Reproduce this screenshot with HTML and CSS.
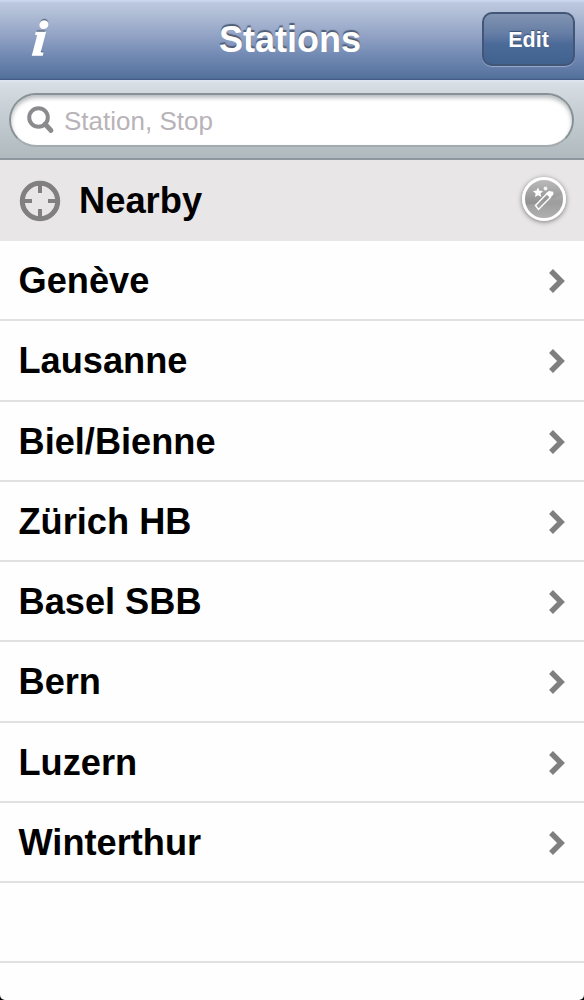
FILE: index.html
```html
<!DOCTYPE html>
<html lang="en">
<head>
    <meta charset="UTF-8">
    <meta name="viewport" content="width=device-width, initial-scale=1.0">
    <title>Stations</title>
    <link rel="stylesheet" href="styles.css">
</head>
<body>
    <div class="screen">
        <header class="navbar">
            <span class="info">i</span>
            <h1>Stations</h1>
            <button class="edit">Edit</button>
        </header>

        <div class="searchbar">
            <div class="search-field">
                <svg class="search-icon" width="28" height="28" viewBox="0 0 28 28">
                    <circle cx="11.500" cy="11.500" r="9.300" fill="none" stroke="#8b8b8e" stroke-width="4"/>
                    <path d="M18 18l6 6.5" stroke="#8b8b8e" stroke-width="4.800" stroke-linecap="round"/>
                </svg>
                <span class="placeholder">Station, Stop</span>
            </div>
        </div>

        <div class="nearby">
            <svg class="target" width="42" height="42" viewBox="0 0 42 42">
                <circle cx="21" cy="21" r="17.7" fill="none" stroke="#808080" stroke-width="5"/>
                <path d="M21 5v8M21 29v8M5 21h8M29 21h8" stroke="#808080" stroke-width="4"/>
            </svg>
            <span class="nearby-label">Nearby</span>
            <div class="wand">
                <svg width="38" height="38" viewBox="0 0 38 38">
                    <path d="M0 25q19-2 38-11v24H0z" fill="#fff" opacity="0.1"/>
                    <path d="M13 7.500l1.500 3.200 3.500.3-2.500 2.400.9 3.500-3.300-1.700-3.100 1.900.6-3.600-2.700-2.400 3.600-.5z" fill="#fff"/>
                    <circle cx="20.500" cy="8.500" r="1.900" fill="#fff" opacity="0.85"/>
                    <path d="M10.500 25.500L22 13.500l3.500 3.700L13.500 29.500z" fill="none" stroke="#fff" stroke-width="1.400"/>
                    <path d="M21 13.500l2.800-2.600 4.500.8v3L25 17.800z" fill="#fff"/>
                </svg>
            </div>
        </div>

        <ul class="stations">
            <li><span>Genève</span><svg class="chevron" viewBox="0 0 18 26"><path d="M3 3l10 10L3 23"/></svg></li>
            <li><span>Lausanne</span><svg class="chevron" viewBox="0 0 18 26"><path d="M3 3l10 10L3 23"/></svg></li>
            <li><span>Biel/Bienne</span><svg class="chevron" viewBox="0 0 18 26"><path d="M3 3l10 10L3 23"/></svg></li>
            <li><span>Zürich HB</span><svg class="chevron" viewBox="0 0 18 26"><path d="M3 3l10 10L3 23"/></svg></li>
            <li><span>Basel SBB</span><svg class="chevron" viewBox="0 0 18 26"><path d="M3 3l10 10L3 23"/></svg></li>
            <li><span>Bern</span><svg class="chevron" viewBox="0 0 18 26"><path d="M3 3l10 10L3 23"/></svg></li>
            <li><span>Luzern</span><svg class="chevron" viewBox="0 0 18 26"><path d="M3 3l10 10L3 23"/></svg></li>
            <li><span>Winterthur</span><svg class="chevron" viewBox="0 0 18 26"><path d="M3 3l10 10L3 23"/></svg></li>
            <li></li>
        </ul>
    </div>
</body>
</html>
```
FILE: styles.css
```css
* {
    box-sizing: border-box;
}

body {
    margin: 0;
    background-color: #000;
    font-family: "Liberation Sans", Arial, sans-serif;
}

.screen {
    height: 1000px;
    overflow: hidden;
    background-color: #fefefe;
    border-radius: 0 0 5px 5px;
}

/* Top bar */
.navbar {
    display: grid;
    grid-template-columns: 102px 1fr 102px;
    align-items: center;
    height: 80px;
    padding: 1px 0 3px;
    background: linear-gradient(#cddcf5 0, #bcc8df 3px, #b0bdd6 14px, #8b9dc1 40px, #6e87b1 58px, #54719d 78px, #3d5680 80px);
}

.info {
    padding-left: 33px;
    font: italic bold 49px/60px "Liberation Serif", serif;
    color: #fff;
    text-shadow: 0 -2px 1px #4a576e;
    -webkit-text-stroke: 1.5px #fff;
    transform: skewX(-5deg);
}

.navbar h1 {
    margin: 0;
    padding: 2px 4px 0 0;
    font-size: 36px;
    line-height: 42px;
    text-align: center;
    color: #fff;
    text-shadow: 0 -2px 1px #4f5d75;
}

.edit {
    width: 93px;
    height: 54px;
    padding: 2px 0 0;
    border: 2px solid #425678;
    border-radius: 10px;
    background: linear-gradient(#8193b1, #657da5 40%, #4b6a98 60%, #41628f);
    box-shadow: 0 1px 1px #9aaccb;
    font: bold 21.5px "Liberation Sans", Arial, sans-serif;
    color: #fff;
    text-shadow: 0 -1px 1px #3a4d6e;
}

/* Search */
.searchbar {
    height: 80px;
    padding: 13px 10px 12px 9px;
    border-bottom: 2px solid #8e96a0;
    background: linear-gradient(#dfe7f4 0, #d7dee4 3px, #cdd5db 20px, #afb9be 78px);
}

.search-field {
    display: flex;
    align-items: center;
    height: 54px;
    padding-left: 16px;
    border: 2px solid #879297;
    border-bottom-color: #a4abae;
    border-radius: 27px;
    background-color: #fff;
    box-shadow: inset 0 3px 4px #b8bcbe;
}

.placeholder {
    margin: 2px 0 0 9px;
    font-size: 26px;
    line-height: 30px;
    color: #b8b3b9;
}

/* Nearby row */
.nearby {
    display: flex;
    align-items: center;
    height: 81px;
    padding: 1px 18px 0 19px;
    background-color: #e8e6e7;
}

.nearby-label {
    flex: 1;
    margin-left: 18px;
    font-size: 36.3px;
    font-weight: bold;
    line-height: 40px;
}

.wand {
    width: 44px;
    height: 44px;
    margin-top: -4px;
    border: 3px solid #fff;
    border-radius: 50%;
    overflow: hidden;
    background: linear-gradient(#bababa, #929292 60%, #a8a8a8);
    box-shadow: 0 1px 5px #777;
}

.wand svg {
    display: block;
}

/* Station list */
.stations {
    margin: 0;
    padding: 0;
    list-style: none;
}

.stations li {
    display: flex;
    align-items: center;
    justify-content: space-between;
    height: 80.25px;
    padding: 2px 18px 0 18.5px;
    border-bottom: 2px solid #e0e0e0;
    font-size: 36.2px;
    font-weight: bold;
    line-height: 40px;
}

.chevron {
    width: 18px;
    height: 26px;
    fill: none;
    stroke: #7f7f7f;
    stroke-width: 5.5;
}
```
